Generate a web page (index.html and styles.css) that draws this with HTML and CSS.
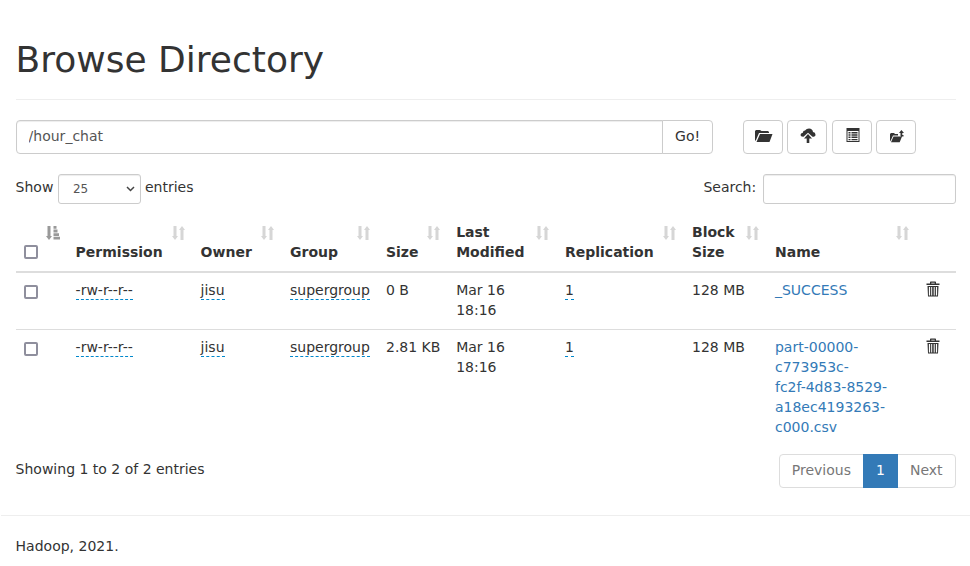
FILE: index.html
```html
<!DOCTYPE html>
<html lang="en">
<head>
<meta charset="utf-8">
<title>Browse Directory</title>
<link rel="stylesheet" href="styles.css">
</head>
<body>
<svg class="defs" aria-hidden="true">
  <symbol id="sort" viewBox="0 0 13 14"><path d="M1.500 0h3v10H6L3 14 0 10h1.500zM8.500 14h3V4H13l-3-4-3 4h1.500z"/></symbol>
  <symbol id="sorted" viewBox="0 0 14 14"><path d="M1.500 0h3v10H6L3 14 0 10h1.500zM7.500 0h3v2.800h-3zM7.500 3.600h4v2.800h-4zM7.500 7.200H13V10H7.500zM7.500 10.800H14v2.800H7.500z"/></symbol>
  <symbol id="trash" viewBox="0 0 14 16"><path d="M4 2.500V1.200Q4 .5 4.700 .5h4.600q.7 0 .7 .7v1.300h3.500V4H.5V2.500zm1.300 0h3.400v-.8H5.300zM1.500 5h11L12 15.500H2zm1.400 1v8.500h1.200V6zm2.300 0v8.500h1V6zm2.500 0v8.500h1V6zm2.200 0v8.500h1.200V6z" fill-rule="evenodd"/></symbol>
</svg>
<main class="page">
  <h1>Browse Directory</h1>
  <div class="toolbar">
    <div class="path"><input type="text" value="/hour_chat"><button>Go!</button></div>
    <div class="actions">
      <button><svg width="18" height="14" viewBox="0 0 18 14"><path d="M0 12V2l1-1h4l1.500 1H13l1 1v1H4L1 11zM5 5h12.500l-3 8H1.500z"/></svg></button>
      <button><svg width="16" height="15" viewBox="0 0 16 15"><path d="M3.500 8.800Q.5 9 .5 7q0-2 2.300-2.300Q3 2.500 5 2.500 6.500.5 9 .5q3.500 0 4 3.500 2.500.3 2.500 2.800 0 2-3 2L8 4.800zM8 6l4 4.500H9.300V15H6.700v-4.500H4z"/></svg></button>
      <button><svg width="14" height="14" viewBox="0 0 14 14"><path fill-rule="evenodd" d="M.5 0h13v14H.5zm1 3v10h11V3z"/><path d="M2.500 4h2v1.400h-2zm3 0h6v1.400h-6zM2.500 6.300h2v1.400h-2zm3 0h6v1.400h-6zM2.500 8.600h2V10h-2zm3 0h6V10h-6zM2.500 10.900h2v1.400h-2zm3 0h6v1.400h-6z"/></svg></button>
      <button><svg width="14" height="13" viewBox="0 0 14 13"><path d="M0 11.500V4l1-1h3l1 1h3v1.500H3L1 10zM3.500 6.500H12L9.700 12.300H1zM9 3l2.400-3L14 3h-1.700v2h1.200v1.500h-2.300q-.7 0-.7-.8V3z"/></svg></button>
    </div>
  </div>
  <div class="filters">
    <label>Show <span class="select">25<svg width="9" height="6" viewBox="0 0 9 6"><path d="m1 1 3.500 3.500L8 1"/></svg></span> entries</label>
    <label>Search: <input type="text" class="search"></label>
  </div>
  <table>
    <colgroup><col class="c0"><col class="c1"><col class="c2"><col class="c3"><col class="c4"><col class="c5"><col class="c6"><col class="c7"><col class="c8"><col class="c9"></colgroup>
    <thead>
      <tr>
        <th><i class="check"></i><svg class="sort active"><use href="#sorted"/></svg></th>
        <th>Permission<svg class="sort"><use href="#sort"/></svg></th>
        <th>Owner<svg class="sort"><use href="#sort"/></svg></th>
        <th>Group<svg class="sort"><use href="#sort"/></svg></th>
        <th>Size<svg class="sort"><use href="#sort"/></svg></th>
        <th>Last Modified<svg class="sort"><use href="#sort"/></svg></th>
        <th>Replication<svg class="sort"><use href="#sort"/></svg></th>
        <th>Block Size<svg class="sort"><use href="#sort"/></svg></th>
        <th>Name<svg class="sort"><use href="#sort"/></svg></th>
        <th></th>
      </tr>
    </thead>
    <tbody>
      <tr>
        <td><i class="check"></i></td>
        <td><span class="edit">-rw-r--r--</span></td>
        <td><span class="edit">jisu</span></td>
        <td><span class="edit">supergroup</span></td>
        <td class="size">0 B</td>
        <td>Mar 16 18:16</td>
        <td><span class="edit">1</span></td>
        <td>128 MB</td>
        <td><a>_SUCCESS</a></td>
        <td><svg class="trash"><use href="#trash"/></svg></td>
      </tr>
      <tr>
        <td><i class="check"></i></td>
        <td><span class="edit">-rw-r--r--</span></td>
        <td><span class="edit">jisu</span></td>
        <td><span class="edit">supergroup</span></td>
        <td class="size">2.81 KB</td>
        <td>Mar 16 18:16</td>
        <td><span class="edit">1</span></td>
        <td>128 MB</td>
        <td><a>part-00000-<br>c773953c-<br>fc2f-4d83-8529-<br>a18ec4193263-<br>c000.csv</a></td>
        <td><svg class="trash"><use href="#trash"/></svg></td>
      </tr>
    </tbody>
  </table>
  <div class="summary">
    <span>Showing 1 to 2 of 2 entries</span>
    <div class="pages"><span>Previous</span><span class="current">1</span><span>Next</span></div>
  </div>
</main>
<footer>Hadoop, 2021.</footer>
</body>
</html>
```
FILE: styles.css
```css
* { box-sizing: border-box; }
body { margin: 0; font: 14px/20px "DejaVu Sans", sans-serif; color: #333; background: #fff; }
.defs { position: absolute; width: 0; height: 0; }
.page { width: 940px; margin-left: 15.6px; padding-top: 40px; }
h1 { margin: 0 0 20px; height: 60px; font-size: 36px; line-height: 40px; font-weight: 400; border-bottom: 1px solid #eee; }
.toolbar { display: flex; height: 34px; }
.path { display: flex; width: 697px; margin-right: 30px; }
input, button { font: inherit; color: #333; background: #fff; border: 1px solid #ccc; border-radius: 4px; margin: 0; }
input { box-shadow: inset 0 1px 1px rgba(0, 0, 0, .075); color: #555; }
.path input { width: 647px; padding: 5px 12px 7px; border-radius: 4px 0 0 4px; }
.path button { width: 51px; margin-left: -1px; padding: 0 0 2px 1px; border-radius: 0 4px 4px 0; }
.actions { display: flex; gap: 4.5px; }
.actions button { width: 40px; padding: 0 0 3px 2px; display: flex; align-items: center; justify-content: center; }
.actions button:nth-child(3) { padding-bottom: 4px; }
.actions button:last-child { margin-left: -.3px; padding-bottom: 1px; }
svg { fill: #333; }
.filters { display: flex; justify-content: space-between; height: 30px; margin-top: 20px; }
.filters label { display: flex; align-items: flex-start; line-height: 27px; }
.select { display: flex; align-items: center; justify-content: space-between; width: 83px; height: 30px; margin: 0 4px 0 4.6px; padding: 0 5px 0 14px; border: 1px solid #ccc; border-radius: 3px; font-size: 12px; color: #555; box-shadow: inset 0 1px 1px rgba(0, 0, 0, .075); }
.select svg { fill: none; stroke: #444; stroke-width: 1.5; }
.search { width: 193px; height: 30px; margin-left: 6.4px; border-radius: 3px; }
table { width: 940px; margin-top: 10px; table-layout: fixed; border-collapse: separate; border-spacing: 0; }
.c0 { width: 52px; }
.c1 { width: 125px; }
.c2 { width: 89.4px; }
.c3 { width: 96px; }
.c4 { width: 70.2px; }
.c5 { width: 108.8px; }
.c6 { width: 127px; }
.c7 { width: 83px; }
.c8 { width: 149.6px; }
.c9 { width: 39px; }
th, td { padding: 7px 8px 9px; text-align: left; }
th { position: relative; height: 59px; padding-right: 30px; vertical-align: bottom; border-bottom: 2px solid #ddd; }
td { vertical-align: top; }
tbody tr + tr td { border-top: 1px solid #ddd; }
.size { white-space: nowrap; }
.check { display: block; width: 14px; height: 14px; margin-top: 4px; border: 2px solid #8f8f9d; border-radius: 2px; }
td .check { margin-top: 5px; }
th .check { margin-bottom: 3px; }
.sort { position: absolute; top: 12px; right: 8px; width: 13px; height: 14px; fill: #d6d6d6; }
.sort.active { width: 14px; fill: #999; }
.edit { padding-bottom: 1px; border-bottom: 1px dashed #08c; }
a { color: #337ab7; }
.trash { display: block; width: 14px; height: 16px; margin: 1px 0 0 1px; }
.summary { display: flex; justify-content: space-between; margin-top: 8px; line-height: 30px; }
.pages { display: flex; height: 34px; border: 1px solid #ddd; border-radius: 4px; color: #777; }
.pages span { padding: 0 12px; }
.pages .current { width: 35px; margin: -1px 0; padding-top: 1px; background: #337ab7; color: #fff; text-align: center; }
footer { margin: 27px 0 0 .6px; padding: 20px 15px; border-top: 1px solid #eee; }
```
